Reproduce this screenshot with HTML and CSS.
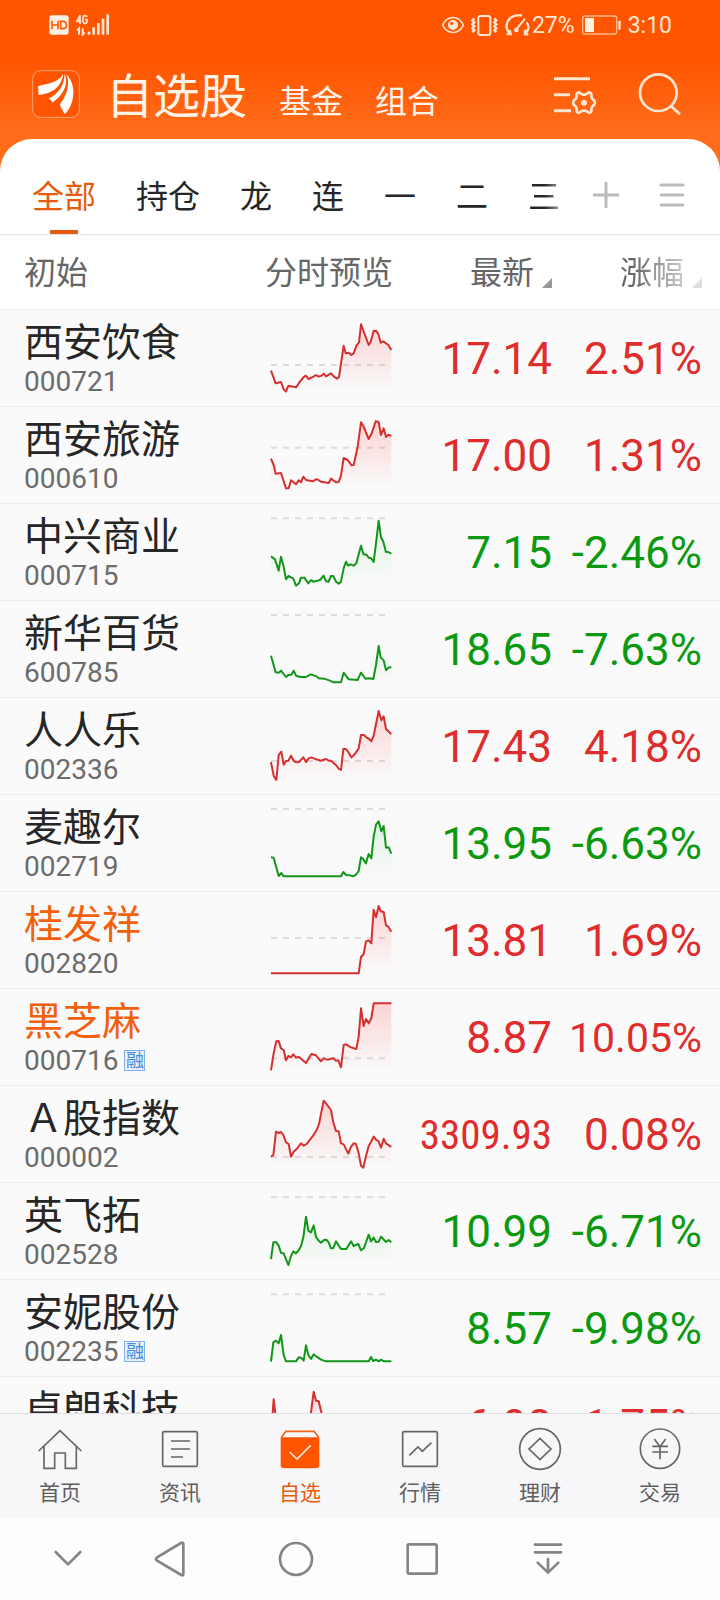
FILE: index.html
```html
<!DOCTYPE html>
<html lang="zh-CN">
<head>
<meta charset="utf-8">
<meta name="viewport" content="width=device-width, initial-scale=1">
<title>自选股</title>
<link rel="stylesheet" href="styles.css">
</head>
<body>
<svg class="defs" aria-hidden="true">
  <defs>
    <linearGradient id="red-fill" x1="0" y1="0" x2="0" y2="1"><stop offset="0" stop-color="#ff3a3a" stop-opacity=".2"/><stop offset="1" stop-color="#ff3a3a" stop-opacity="0"/></linearGradient>
    <linearGradient id="green-fill" x1="0" y1="0" x2="0" y2="1"><stop offset="0" stop-color="#19b32a" stop-opacity=".12"/><stop offset="1" stop-color="#19b32a" stop-opacity="0"/></linearGradient>
  </defs>
</svg>
<div class="app">
  <header class="header">
    <div class="status">
      <div class="status-side">
        <svg width="20" height="20" viewBox="0 0 60 60"><rect x="1" y="1" width="58" height="58" rx="7" fill="#fff0e2"/><path d="M9 17v26M27 17v26M9 30h18M35 19v22h7c7 0 10-4 10-11s-3-11-10-11z" fill="none" stroke="#ff5a08" stroke-width="5"/></svg>
        <svg width="34" height="22" viewBox="0 0 102 66"><g fill="none" stroke="#ffe6d2" stroke-width="5"><path d="M12 30V4L3 22h13M33 9c-2-6-12-6-12 3v9c0 9 12 9 12 2v-6h-6"/><path d="M3 49l6-6v19M20 43v19l6-7" stroke-width="6"/></g><g fill="#ffe6d2"><rect x="35" y="53" width="8" height="9"/><rect x="49" y="40" width="8" height="22"/><rect x="63" y="27" width="8" height="35"/><rect x="77" y="14" width="8" height="48"/><rect x="91" y="1" width="8" height="61"/></g></svg>
      </div>
      <div class="status-side status-right">
        <svg width="22" height="18" viewBox="0 0 66 54"><path d="M2 27C16-3 50-3 64 27C50 57 16 57 2 27z" fill="none" stroke="#ffe6d2" stroke-width="5"/><circle cx="33" cy="27" r="15" fill="#ffe6d2"/><circle cx="29" cy="22" r="5" fill="#ff5a08"/></svg>
        <svg width="27" height="21" viewBox="0 0 81 63"><g fill="none" stroke="#ffe6d2"><rect x="22" y="3" width="36" height="57" rx="6" stroke-width="6"/><path d="M10 10l-6 6 6 6-6 6 6 6-6 6 6 6-6 6M70 10l6 6-6 6 6 6-6 6 6 6-6 6 6 6" stroke-width="7"/></g></svg>
        <svg width="25" height="22" viewBox="0 0 75 66"><g fill="none" stroke="#ffe6d2" stroke-width="7"><path d="M17 58C-6 42 6 5 39 4h12M65 25c9 12 6 26-6 35M14 48l3 12H5M60 47v14h10"/><path d="M60 14L36 44" stroke-width="6"/></g><circle cx="34" cy="48" r="7" fill="#ffe6d2"/></svg>
        <span class="battery-text">27%</span>
        <svg width="39" height="20" viewBox="0 0 117 60"><rect x="2" y="3" width="102" height="54" rx="7" fill="none" stroke="#ffb98f" stroke-width="4"/><rect x="9" y="9" width="27" height="42" fill="#fff0e2"/><rect x="109" y="17" width="7" height="27" rx="2" fill="#ffe6d2"/></svg>
        <span>3:10</span>
      </div>
    </div>
    <div class="title-row">
      <svg class="logo" width="48" height="48" viewBox="96 210 144 144"><rect x="98" y="212" width="140" height="140" rx="24" fill="#ff5500" stroke="#ffa472" stroke-width="3"/><g fill="#fff"><path d="M114 259C140 250 170 252 190 222C184 262 156 281 116 285z"/><path d="M145 296C172 284 192 262 194 222C208 256 184 292 156 308C156 300 152 297 145 296z"/><path d="M199 222C211 252 202 284 179 314L194 343C220 318 235 262 199 222z"/></g></svg>
      <nav class="title-nav">
        <h1>自选股</h1>
        <a href="#">基金</a>
        <a href="#">组合</a>
      </nav>
      <button class="icon-btn" aria-label="设置"><svg width="44" height="44" viewBox="579 214 132 132"><g fill="none" stroke="#ffe6d2" stroke-width="9"><path d="M582 234h108M582 282h48M582 330h51"/><path d="M654 276Q658 274 662 279Q672 285 682 279Q686 274 690 276Q696 280 694 286Q694 294 703 300Q706 306 703 312Q694 318 694 326Q696 332 690 336Q686 338 682 333Q672 327 662 333Q658 338 654 336Q648 332 650 326Q650 318 641 312Q638 306 641 300Q650 294 650 286Q648 280 654 276z" stroke-linejoin="round" stroke-width="8"/></g><circle cx="672" cy="306" r="9" fill="#ffe6d2"/></svg></button>
      <button class="icon-btn" aria-label="搜索"><svg width="44" height="44" viewBox="833 214 132 132"><g fill="none" stroke="#ffe6d2" stroke-width="8"><circle cx="894" cy="276" r="55"/><path d="M931 315l28 26"/></g></svg></button>
    </div>
  </header>

  <main class="panel">
    <nav class="groups">
      <a class="active" href="#">全部</a>
      <a href="#">持仓</a>
      <a href="#">龙</a>
      <a href="#">连</a>
      <a href="#">一</a>
      <a href="#">二</a>
      <a class="fade-soft" href="#">三</a>
      <div class="group-tools">
        <button aria-label="添加分组"><svg width="26" height="26" viewBox="0 0 26 26"><path d="M13 1v24M1 13h24" stroke="#bbb" stroke-width="3" stroke-linecap="round"/></svg></button>
        <button aria-label="分组列表"><svg width="26" height="26" viewBox="0 0 26 26"><path d="M2 3h22M2 13h22M2 23h22" stroke="#bbb" stroke-width="3" stroke-linecap="round"/></svg></button>
      </div>
    </nav>

    <div class="list">
    <table class="stocks">
      <colgroup><col><col class="col-chart"><col class="col-price"><col class="col-change"></colgroup>
      <thead>
        <tr>
          <th class="name">初始</th>
          <th class="chart-head">分时预览</th>
          <th class="num">最新<svg class="sort" width="10" height="10" viewBox="0 0 10 10"><path d="M10 0v10H0z" fill="#999"/></svg></th>
          <th class="num last"><span class="fade-strong">涨幅</span><svg class="sort" width="10" height="10" viewBox="0 0 10 10"><path d="M10 0v10H0z" fill="#ddd"/></svg></th>
        </tr>
      </thead>
      <tbody>
        <tr class="up">
          <td class="name"><div class="stock">西安饮食</div><div class="code">000721</div></td>
          <td><svg class="chart" viewBox="0 30 480 288"><path class="base" d="M63 195H405"/><path class="area" d="M63 275V212L77 250 93 246 108 275 115 257 138 262 160 232 167 227 176 237 198 225 221 221 243 220 261 236 267 231 281 137 287 160 304 165 320 135 327 128 333 73 356 135 371 92 379 93 392 128 415 135 424 150V275z"/><polyline points="63,212 77,250 93,246 101,268 108,275 115,257 138,262 150,245 160,232 167,227 176,237 190,230 198,225 206,230 215,227 221,221 228,229 243,220 252,230 261,236 267,231 281,137 287,160 296,158 304,165 311,160 320,135 327,128 333,73 356,135 362,125 371,92 379,93 386,105 392,128 400,124 415,135 424,150"/></svg></td>
          <td class="num">17.14</td><td class="num last">2.51%</td>
        </tr>
        <tr class="up">
          <td class="name"><div class="stock">西安旅游</div><div class="code">000610</div></td>
          <td><svg class="chart" viewBox="0 321 480 288"><path class="base" d="M63 443H405"/><path class="area" d="M63 565V476L77 521 93 519 108 565 116 565 123 541 160 530 200 537 236 549 266 546 281 474 293 480 305 496 311 495 323 440 333 367 356 417 377 364 386 366 393 405 401 385 408 411 424 408V565z"/><polyline points="63,476 71,495 77,521 93,519 108,565 116,565 123,541 138,553 146,541 153,547 160,530 168,540 188,544 200,537 213,545 236,549 243,536 258,547 266,546 273,527 281,474 293,480 305,496 311,495 323,440 333,367 340,378 356,417 365,400 377,364 386,366 393,405 401,385 408,411 415,404 424,408"/></svg></td>
          <td class="num">17.00</td><td class="num last">1.31%</td>
        </tr>
        <tr class="down">
          <td class="name"><div class="stock">中兴商业</div><div class="code">000715</div></td>
          <td><svg class="chart" viewBox="0 612 480 288"><path class="base" d="M63 655H405"/><path class="area" d="M63 857V769L75 778 86 812 93 770 108 838 138 857 153 833 175 850 221 827 236 845 250 828 266 851 288 785 311 797 333 737 340 762 371 786 386 662 393 712 408 756 424 761V857z"/><polyline points="63,769 75,778 86,812 93,770 101,800 108,838 115,828 130,836 138,857 147,850 153,833 163,833 175,850 183,840 190,845 210,840 221,827 228,844 236,845 243,828 250,828 258,845 266,851 273,845 281,805 288,785 294,797 302,793 311,797 319,790 333,737 340,762 350,765 356,773 363,774 371,786 378,730 386,662 393,712 400,725 408,756 415,756 424,761"/></svg></td>
          <td class="num">7.15</td><td class="num last">-2.46%</td>
        </tr>
        <tr class="down">
          <td class="name"><div class="stock">新华百货</div><div class="code">600785</div></td>
          <td><svg class="chart" viewBox="0 903 480 288"><path class="base" d="M63 945H405"/><path class="area" d="M63 1147V1067L77 1117 108 1131 131 1112 152 1131 251 1147 273 1147 281 1118 296 1138 370 1137 386 1038 392 1072 408 1111 424 1101V1147z"/><polyline points="63,1067 77,1117 86,1118 93,1112 108,1131 115,1125 124,1124 131,1112 138,1127 152,1131 168,1131 182,1123 200,1129 206,1135 222,1136 240,1142 251,1147 273,1147 281,1118 296,1138 323,1140 333,1118 346,1136 357,1135 370,1137 378,1095 386,1038 392,1072 401,1081 408,1111 415,1103 424,1101"/></svg></td>
          <td class="num">18.65</td><td class="num last">-7.63%</td>
        </tr>
        <tr class="up">
          <td class="name"><div class="stock">人人乐</div><div class="code">002336</div></td>
          <td><svg class="chart" viewBox="0 24 480 288"><path class="base" d="M63 213H405"/><path class="area" d="M63 270V216L79 270 86 195 94 185 101 224 123 197 147 216 184 202 243 212 273 240 280 177 304 202 326 176 333 135 364 154 371 137 386 63 394 91 401 79 408 117 424 132V270z"/><polyline points="63,216 71,257 79,270 86,195 94,185 101,224 108,213 115,212 123,197 131,212 138,217 147,216 160,202 168,216 175,206 184,202 198,208 213,212 228,207 236,212 243,212 258,225 266,236 273,240 280,177 288,177 296,188 304,202 313,194 326,176 333,135 342,135 350,143 358,147 364,154 371,137 386,63 394,91 401,79 408,117 424,132"/></svg></td>
          <td class="num">17.43</td><td class="num last">4.18%</td>
        </tr>
        <tr class="down">
          <td class="name"><div class="stock">麦趣尔</div><div class="code">002719</div></td>
          <td><svg class="chart" viewBox="0 315 480 288"><path class="base" d="M63 357H405"/><path class="area" d="M63 559V502H71L86 558 273 559 318 554 333 502 348 520 364 505 378 404 386 394 394 424 401 408 408 473 424 491V559z"/><polyline points="63,502 71,503 86,558 94,549 101,559 273,559 280,546 288,555 300,556 309,559 318,554 326,543 333,502 340,508 348,520 356,492 364,505 371,440 378,404 386,394 394,424 401,408 408,473 416,472 424,491"/></svg></td>
          <td class="num">13.95</td><td class="num last">-6.63%</td>
        </tr>
        <tr class="up">
          <td class="name"><div class="stock held">桂发祥</div><div class="code">002820</div></td>
          <td><svg class="chart" viewBox="0 606 480 288"><path class="base" d="M63 744H405"/><path class="area" d="M326 850L333 801 341 792 348 754 364 760 371 659 378 682 386 648 401 666 408 706 424 725V850z"/><polyline points="63,850 326,850 333,801 341,792 348,754 356,751 364,760 371,659 378,682 386,648 392,664 401,666 408,706 415,710 424,725"/></svg></td>
          <td class="num">13.81</td><td class="num last">1.69%</td>
        </tr>
        <tr class="up">
          <td class="name"><div class="stock held">黑芝麻</div><div class="code">000716<span class="badge">融</span></div></td>
          <td><svg class="chart" viewBox="0 897 480 288"><path class="base" d="M63 1105H405"/><path class="area" d="M63 1141L79 1054 86 1053 108 1111 130 1093 168 1119 184 1092 213 1114 250 1105 273 1132 281 1065 319 1077 333 955 341 1008 356 1000 371 940H424V1141z"/><polyline points="63,1141 71,1090 79,1054 86,1053 93,1075 101,1080 108,1111 115,1098 123,1102 130,1093 138,1103 146,1100 168,1119 184,1092 198,1096 213,1114 221,1105 232,1109 250,1105 258,1112 265,1111 273,1132 281,1065 288,1063 303,1072 319,1077 326,1040 333,955 341,1008 348,987 356,1000 364,985 371,940 424,940"/></svg></td>
          <td class="num">8.87</td><td class="num last long">10.05%</td>
        </tr>
        <tr class="up">
          <td class="name"><div class="stock">Ａ股指数</div><div class="code">000002</div></td>
          <td><svg class="chart" viewBox="0 18 480 288"><path class="base" d="M63 231H405"/><path class="area" d="M63 263V230L70 225 78 155 93 156 116 192 123 230 153 190 190 166 207 132 221 62 243 90 258 153 273 190 295 221 311 190 326 220 340 263 356 198 371 170 393 203 401 176 424 201V263z"/><polyline points="63,230 70,225 78,155 86,159 93,156 100,165 108,187 116,192 123,230 131,215 140,207 153,190 161,197 170,192 190,166 200,150 207,132 221,62 228,70 243,90 250,128 258,153 266,154 273,190 281,193 295,221 302,202 311,190 318,192 326,220 333,257 340,263 348,228 356,198 363,186 371,170 378,179 386,184 393,203 401,176 408,190 424,201"/></svg></td>
          <td class="num long narrow">3309.93</td><td class="num last">0.08%</td>
        </tr>
        <tr class="down">
          <td class="name"><div class="stock">英飞拓</div><div class="code">002528</div></td>
          <td><svg class="chart" viewBox="0 309 480 288"><path class="base" d="M63 352H405"/><path class="area" d="M63 555V537L70 487 79 487 101 520 115 555 130 514 153 498 168 410 183 457 191 436 213 488 229 479 243 505 273 507 303 484 333 511 356 464 393 470 424 487V555z"/><polyline points="63,537 70,487 79,487 86,497 93,519 101,520 115,555 123,528 130,514 138,520 146,511 153,498 160,472 168,410 175,452 183,457 191,436 198,471 206,482 213,488 222,480 229,479 236,487 243,505 250,504 258,484 273,507 289,507 303,484 311,498 325,492 333,511 342,504 356,464 363,484 371,473 378,486 386,485 393,470 408,486 416,480 424,487"/></svg></td>
          <td class="num">10.99</td><td class="num last">-6.71%</td>
        </tr>
        <tr class="down">
          <td class="name"><div class="stock">安妮股份</div><div class="code">002235<span class="badge">融</span></div></td>
          <td><svg class="chart" viewBox="0 600 480 288"><path class="base" d="M63 643H405"/><path class="area" d="M63 844L70 787 86 790 93 765 108 844 146 832 161 842 168 796 183 837 191 823 228 844z"/><polyline points="63,845 70,787 78,782 86,790 93,765 101,825 108,844 138,844 146,832 153,833 161,842 168,796 175,825 183,837 191,823 200,830 213,839 228,844 356,844 363,831 370,843 378,839 386,844 393,839 401,844 424,844"/></svg></td>
          <td class="num">8.57</td><td class="num last">-9.98%</td>
        </tr>
        <tr class="up">
          <td class="name"><div class="stock">卓朗科技</div><div class="code">600225</div></td>
          <td><svg class="chart" viewBox="0 891 480 288"><path class="area" d="M63 1040L71 958 78 1010 100 1060H175L191 935 206 964 230 1060z"/><polyline points="65,1040 71,958 77,1010 100,1060 175,1060 191,935 198,962 206,964 215,1000 230,1060 424,1090"/></svg></td>
          <td class="num">6.98</td><td class="num last">1.75%</td>
        </tr>
      </tbody>
    </table>
    </div>
  </main>

  <nav class="tabbar">
    <a href="#"><svg viewBox="114 201 132 132"><path d="M116 273L180 212L244 273M132 259V325H164V279H196V325H229V259"/></svg>首页</a>
    <a href="#"><svg viewBox="474 201 132 132"><rect x="488" y="215" width="104" height="104" rx="4"/><path d="M513 243h57M513 267h57M513 291h36"/></svg>资讯</a>
    <a class="active" href="#"><svg viewBox="834 201 132 132"><path d="M844 232L858 214H942L956 232"/><path class="solid" d="M842 232H958V316Q958 325 949 325H851Q842 325 842 316z"/><path class="check" d="M869 276L891 297L932 256"/></svg>自选</a>
    <a href="#"><svg viewBox="114 201 132 132"><rect x="128" y="215" width="104" height="104" rx="4"/><path d="M148 286L174 261L187 274L214 248"/></svg>行情</a>
    <a href="#"><svg viewBox="474 201 132 132"><circle cx="540" cy="267" r="61"/><path d="M540 235L573 267L540 299L507 267z"/></svg>理财</a>
    <a href="#"><svg viewBox="833 201 132 132"><circle cx="899" cy="266" r="59"/><path d="M882 237L899 260L916 237M899 260V298M876 259H923M876 276H923"/></svg>交易</a>
  </nav>

  <nav class="sysnav">
    <button aria-label="收起"><svg viewBox="150 543 108 108"><path d="M167 576L204 613L241 576"/></svg></button>
    <button aria-label="返回"><svg viewBox="456 543 108 108"><path d="M543 549Q550 546 550 552V642Q550 648 544 645L470 601Q466 597 470 593z"/></svg></button>
    <button aria-label="主页"><svg viewBox="834 543 108 108"><circle cx="888" cy="597" r="48"/></svg></button>
    <button aria-label="最近任务"><svg viewBox="132 543 108 108"><rect x="143" y="553" width="87" height="88" rx="4"/></svg></button>
    <button aria-label="下拉通知"><svg viewBox="510 543 108 108"><path d="M525 554H603M525 577H603M564 597V638M533 608L564 638L595 608"/></svg></button>
  </nav>
</div>
</body>
</html>
```

FILE: styles.css
```css
* {
  box-sizing: border-box;
}

body {
  margin: 0;
  font-family: Roboto, "Noto Sans CJK SC", sans-serif;
  color: #262626;
  background: #fdfdfd;
}

a {
  color: inherit;
  text-decoration: none;
}

button {
  padding: 0;
  border: 0;
  background: none;
}

svg {
  display: block;
}

.defs {
  position: absolute;
  width: 0;
  height: 0;
}

.app {
  display: flex;
  flex-direction: column;
  height: 100vh;
}

/* Header */
.header {
  padding-bottom: 32px;
  margin-bottom: -32px;
  background: linear-gradient(#ff5500 0, #ff5500 60px, #ff6c1a 130px);
}

.status {
  display: flex;
  justify-content: space-between;
  align-items: center;
  height: 50px;
  padding: 0 48px 0 49px;
  font-size: 23px;
  color: #ffe6d2;
}

.status-side {
  display: flex;
  align-items: center;
  gap: 7px;
}

.battery-text {
  margin-left: -5px;
}

.title-row {
  display: flex;
  align-items: center;
  height: 89px;
  padding: 0 38px 2px 32px;
}

.title-nav {
  display: flex;
  align-items: baseline;
  gap: 32px;
  flex: 1;
  padding-top: 12px;
  margin-left: 26px;
  font-size: 32px;
  line-height: 48px;
  color: #fff4e8;
}

.title-nav h1 {
  margin: 0;
  font-size: 47px;
  font-weight: 400;
}

.icon-btn + .icon-btn {
  margin-left: 41px;
}

/* White panel */
.panel {
  display: flex;
  flex-direction: column;
  flex: 1;
  min-height: 0;
  border-radius: 32px 32px 0 0;
  background: #fff;
}

.groups {
  display: flex;
  gap: 40px;
  height: 96px;
  padding: 0 35px 0 32px;
  border-bottom: 1px solid #e4e4e4;
  font-size: 32px;
  line-height: 48px;
  white-space: nowrap;
}

.groups > a {
  padding-top: 34px;
}

.groups .active {
  color: #e65a0c;
  background: linear-gradient(#e65a0c, #e65a0c) center bottom / 28px 4px no-repeat;
}

.group-tools {
  display: flex;
  flex: 1;
  justify-content: flex-end;
  gap: 40px;
  padding-top: 16px;
  margin-left: -8px;
}

.fade-soft {
  color: transparent;
  background: linear-gradient(90deg, #262626 50%, #999) text;
  -webkit-background-clip: text;
}

.fade-strong {
  color: transparent;
  background: linear-gradient(90deg, #666 20%, #ccc) text;
  -webkit-background-clip: text;
}

/* Stock list */
.list {
  flex: 1;
  min-height: 0;
  overflow: hidden;
}

.stocks {
  width: 100%;
  table-layout: fixed;
  border-collapse: separate;
  border-spacing: 0;
}

.col-chart {
  width: 160px;
}

.col-price {
  width: 142px;
}

.col-change {
  width: 168px;
}

th,
td {
  padding: 0;
  border-bottom: 1px solid #ececec;
  text-align: left;
  white-space: nowrap;
}

th {
  height: 75px;
  padding-top: 2px;
  font-size: 32px;
  line-height: 48px;
  font-weight: 400;
  color: #666;
}

td {
  height: 97px;
  background: #fafafa;
}

.name {
  padding-left: 24px;
}

.chart-head {
  padding-left: 15px;
}

.num {
  text-align: right;
}

td.num {
  padding-top: 1px;
  font-size: 44px;
}

td.long {
  font-size: 41px;
}

.narrow {
  font-family: "Roboto Condensed", Roboto, sans-serif;
}

.last {
  padding-right: 18px;
}

.sort {
  display: inline-block;
  margin-left: 8px;
  vertical-align: -4px;
}

.stock {
  padding-top: 6px;
  font-size: 39px;
  line-height: 40px;
}

.held {
  color: #f3600c;
}

.code {
  display: flex;
  align-items: center;
  gap: 6px;
  font-size: 28px;
  line-height: 37px;
  color: #6c6c6c;
}

.badge {
  width: 21px;
  height: 21px;
  border: 1px solid #7fb0ea;
  background: #e6f1fd;
  font-size: 18px;
  line-height: 19px;
  text-align: center;
  color: #4a8bd8;
}

.up .num {
  color: #df2c2c;
}

.down .num {
  color: #0b9a0f;
}

.chart {
  width: 160px;
  height: 96px;
  fill: none;
}

.chart polyline {
  stroke-width: 6;
  stroke-linejoin: round;
}

.base {
  stroke: #dcdcdc;
  stroke-width: 6;
  stroke-dasharray: 18 18;
}

.up polyline {
  stroke: #d62f2f;
}

.down polyline {
  stroke: #12961a;
}

.up .area {
  fill: url(#red-fill);
}

.down .area {
  fill: url(#green-fill);
}

/* Bottom tabs */
.tabbar {
  display: grid;
  grid-template-columns: repeat(6, 1fr);
  height: 105px;
  padding-top: 13px;
  border-top: 1px solid #dfdfe2;
  background: #f7f7f9;
  font-size: 21px;
  line-height: 30px;
  color: #5e5e5e;
}

.tabbar a {
  display: flex;
  flex-direction: column;
  align-items: center;
  gap: 7px;
}

.tabbar svg {
  width: 44px;
  height: 44px;
  fill: none;
  stroke: #666;
  stroke-width: 5;
}

.tabbar .active {
  color: #ea5a0a;
}

.tabbar .active svg {
  stroke: #f0661c;
}

.tabbar .solid {
  fill: #ff5500;
  stroke: none;
}

.tabbar .check {
  stroke: #ffe6d2;
}

/* System navigation */
.sysnav {
  display: grid;
  grid-template-columns: 78fr repeat(4, 126fr) 109fr;
  height: 82px;
  padding-left: 4%;
  background: #fdfdfd;
}

.sysnav button {
  display: flex;
  align-items: center;
  justify-content: center;
}

.sysnav svg {
  width: 36px;
  height: 36px;
  fill: none;
  stroke: #858585;
  stroke-width: 8;
  stroke-linecap: round;
  stroke-linejoin: round;
}
```
